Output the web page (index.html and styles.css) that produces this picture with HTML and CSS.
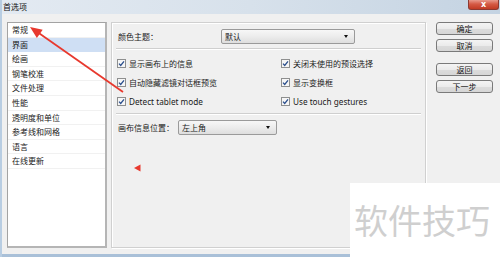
FILE: index.html
```html
<!DOCTYPE html>
<html>
<head>
<meta charset="utf-8">
<link rel="stylesheet" href="styles.css">
</head>
<body>
<div class="window">
  <div class="titlebar">
    <span class="title">首选项</span>
    <div class="close"><span>x</span></div>
  </div>
  <div class="client">
    <ul class="list">
      <li>常规</li>
      <li class="sel">界面</li>
      <li>绘画</li>
      <li>钢笔校准</li>
      <li>文件处理</li>
      <li>性能</li>
      <li>透明度和单位</li>
      <li>参考线和网格</li>
      <li>语言</li>
      <li>在线更新</li>
      <li class="empty"></li>
    </ul>
    <div class="panel">
      <div class="row theme-row">
        <span class="label">颜色主题：</span>
        <div class="select theme-select"><span>默认</span><i class="caret"></i></div>
      </div>
      <div class="sep"></div>
      <div class="checks">
        <label class="check"><svg class="box" viewBox="0 0 9 9"><rect x="0.5" y="0.5" width="8" height="8" fill="#f6f6f6" stroke="#8e8f8f"/><path d="M2 4.6 L3.7 6.4 L7 2.3" fill="none" stroke="#2a4e8c" stroke-width="1.3"/></svg>显示画布上的信息</label>
        <label class="check"><svg class="box" viewBox="0 0 9 9"><rect x="0.5" y="0.5" width="8" height="8" fill="#f6f6f6" stroke="#8e8f8f"/><path d="M2 4.6 L3.7 6.4 L7 2.3" fill="none" stroke="#2a4e8c" stroke-width="1.3"/></svg>关闭未使用的预设选择</label>
        <label class="check"><svg class="box" viewBox="0 0 9 9"><rect x="0.5" y="0.5" width="8" height="8" fill="#f6f6f6" stroke="#8e8f8f"/><path d="M2 4.6 L3.7 6.4 L7 2.3" fill="none" stroke="#2a4e8c" stroke-width="1.3"/></svg>自动隐藏滤镜对话框预览</label>
        <label class="check"><svg class="box" viewBox="0 0 9 9"><rect x="0.5" y="0.5" width="8" height="8" fill="#f6f6f6" stroke="#8e8f8f"/><path d="M2 4.6 L3.7 6.4 L7 2.3" fill="none" stroke="#2a4e8c" stroke-width="1.3"/></svg>显示变换框</label>
        <label class="check latin"><svg class="box" viewBox="0 0 9 9"><rect x="0.5" y="0.5" width="8" height="8" fill="#f6f6f6" stroke="#8e8f8f"/><path d="M2 4.6 L3.7 6.4 L7 2.3" fill="none" stroke="#2a4e8c" stroke-width="1.3"/></svg>Detect tablet mode</label>
        <label class="check latin"><svg class="box" viewBox="0 0 9 9"><rect x="0.5" y="0.5" width="8" height="8" fill="#f6f6f6" stroke="#8e8f8f"/><path d="M2 4.6 L3.7 6.4 L7 2.3" fill="none" stroke="#2a4e8c" stroke-width="1.3"/></svg>Use touch gestures</label>
      </div>
      <div class="sep sep2"></div>
      <div class="row pos-row">
        <span class="label">画布信息位置：</span>
        <div class="select pos-select"><span>左上角</span><i class="caret"></i></div>
      </div>
    </div>
    <div class="buttons">
      <button class="btn">确定</button>
      <button class="btn">取消</button>
      <button class="btn gap">返回</button>
      <button class="btn">下一步</button>
    </div>
  </div>
  <div class="frame-bottom"></div>
</div>

<svg class="overlay" width="500" height="257" viewBox="0 0 500 257">
  <line x1="123" y1="92" x2="38" y2="32.5" stroke="#e8392e" stroke-width="1.8"/>
  <polygon points="30,27 42.7,29.8 36.9,38" fill="#e8392e"/>
  <polygon points="134,168 140.5,164.5 140.5,171.5" fill="#e8392e"/>
</svg>

<div class="watermark">软件技巧</div>
</body>
</html>
```

FILE: styles.css
```css
* { box-sizing: border-box; }
html, body { margin: 0; padding: 0; }
body {
  width: 500px;
  height: 257px;
  overflow: hidden;
  position: relative;
  background: #f0f0f0;
  font-family: "Noto Sans", "Noto Sans CJK SC", sans-serif;
  font-size: 8px;
  color: #1a1a1a;
}
.window {
  width: 500px;
  height: 257px;
  display: flex;
  flex-direction: column;
  background: #f0f0f0;
  border-left: 2px solid #b8cde2;
}
.titlebar {
  height: 14px;
  flex: none;
  display: flex;
  align-items: center;
  justify-content: space-between;
  background: linear-gradient(90deg, #e3eaf2 0%, #d7e1eb 50%, #c4d3e2 100%);
  position: relative;
}
.title {
  padding-left: 1px;
  font-size: 8px;
  line-height: 14px;
  color: #111;
  font-family: "Noto Sans CJK SC", sans-serif;
}
.close {
  align-self: flex-start;
  width: 31px;
  height: 10px;
  margin-right: 1px;
  border: 1px solid #8c3a32;
  border-top: none;
  border-radius: 0 0 3px 3px;
  background: linear-gradient(180deg, #e89a8c 0%, #d55a45 45%, #c13b24 100%);
  display: flex;
  align-items: center;
  justify-content: center;
}
.close span {
  color: #fff;
  font-size: 8px;
  line-height: 8px;
  font-weight: bold;
  font-family: "DejaVu Sans", sans-serif;
}
.client {
  flex: 1;
  display: flex;
  padding: 8px 0 0 5px;
  min-height: 0;
}
.list {
  list-style: none;
  margin: 0;
  padding: 0;
  width: 100px;
  height: 226px;
  background: #fff;
  border: 1px solid #a3a3a3;
  border-right-width: 2px;
  border-bottom-width: 2px;
  border-right-color: #b5b5b5;
  border-bottom-color: #b5b5b5;
  font-family: "Noto Sans CJK SC", sans-serif;
  display: flex;
  flex-direction: column;
}
.list li {
  height: 14.6px;
  line-height: 14.6px;
  padding-left: 4px;
  border-bottom: 1px solid #f1f1f1;
  flex: none;
  white-space: nowrap;
}
.list li.sel {
  background: #cfdff4;
  border-bottom-color: #cfdff4;
}
.list li.empty { border: none; flex: 1; }
.panel {
  width: 315px;
  height: 226px;
  margin-left: 4px;
  border: 1px solid #d0d0d0;
  box-shadow: inset 1px 1px 0 #fff, 1px 1px 0 #fff;
  padding: 6px 3px 0 3px;
  display: flex;
  flex-direction: column;
  font-family: "Noto Sans CJK SC", sans-serif;
}
.row {
  display: flex;
  align-items: center;
  height: 15px;
  padding-left: 3px;
}
.label { white-space: nowrap; }
.select {
  height: 15px;
  border: 1px solid #9a9a9a;
  border-radius: 2px;
  background: linear-gradient(180deg, #f7f7f7 0%, #ececec 50%, #dedede 100%);
  display: flex;
  align-items: center;
  justify-content: space-between;
  padding: 0 6px 0 3px;
}
.theme-select { width: 134px; margin-left: 63px; }
.pos-select { width: 99px; margin-left: 4px; }
.caret {
  width: 0;
  height: 0;
  border-left: 2.5px solid transparent;
  border-right: 2.5px solid transparent;
  border-top: 3px solid #111;
}
.sep {
  height: 2px;
  margin: 4px 1px 0 1px;
  border-top: 1px solid #cfcfcf;
  border-bottom: 1px solid #fff;
  flex: none;
}
.sep2 { margin-top: 2px; }
.checks {
  display: grid;
  grid-template-columns: 164px 1fr;
  grid-auto-rows: 19px;
  padding: 4px 0 0 2px;
}
.check {
  display: flex;
  align-items: center;
  white-space: nowrap;
}
.check.latin { font-family: "Noto Sans", sans-serif; font-size: 8.2px; }
.box {
  width: 9px;
  height: 9px;
  margin-right: 3px;
  flex: none;
}
.pos-row { margin-top: 5px; }
.buttons {
  display: flex;
  flex-direction: column;
  margin-left: 10px;
  padding-top: 0;
  width: 57px;
}
.btn {
  width: 57px;
  height: 13px;
  margin: 0 0 4px 0;
  padding: 0;
  border: 1px solid #7a7a7a;
  border-radius: 3px;
  background: linear-gradient(180deg, #f4f4f4 0%, #ebebeb 50%, #dcdcdc 51%, #d6d6d6 100%);
  font-family: "Noto Sans CJK SC", sans-serif;
  font-size: 8px;
  line-height: 11px;
  color: #111;
}
.btn.gap { margin-top: 7px; }
.frame-bottom {
  height: 3px;
  flex: none;
  background: #a9c0d8;
}
.overlay {
  position: absolute;
  left: 0;
  top: 0;
  pointer-events: none;
}
.watermark {
  position: absolute;
  left: 350px;
  top: 183px;
  width: 150px;
  height: 74px;
  background: #fff;
  color: #cfcfcf;
  font-family: "Noto Sans CJK SC", sans-serif;
  font-size: 34px;
  line-height: 74px;
  padding-left: 4px;
  white-space: nowrap;
  letter-spacing: 0;
}
```
